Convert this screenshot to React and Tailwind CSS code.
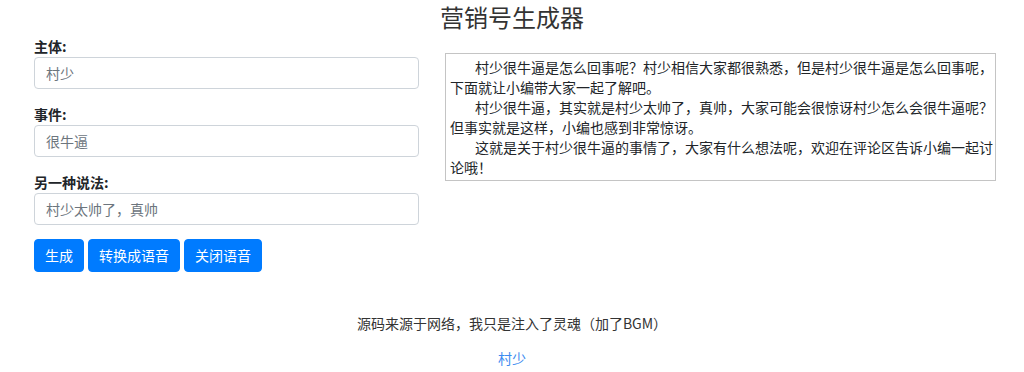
import React from "react";

const font = { fontFamily: '"Noto Sans CJK SC", "Liberation Sans", sans-serif' };

function Field({ label, placeholder }) {
  return (
    <div className="mb-[14px]">
      <div className="text-[14px] leading-[22px] font-bold text-[#212529]">{label}</div>
      <input
        readOnly
        placeholder={placeholder}
        className="block w-full h-[32px] rounded-[4px] border border-[#ced4da] bg-white px-[11px] text-[14px] text-[#495057] placeholder:text-[#6c757d] outline-none"
        style={font}
      />
    </div>
  );
}

export default function App() {
  return (
    <div className="w-[1024px] h-[372px] bg-white text-[#212529] overflow-hidden" style={font}>
      <h1 className="text-center text-[24px] leading-[32px] font-normal text-[#333] pt-[1px]">营销号生成器</h1>
      <div className="flex pl-[34px] mt-[2px] gap-[26px]">
        <div className="w-[385px] shrink-0">
          <Field label="主体:" placeholder="村少" />
          <Field label="事件:" placeholder="很牛逼" />
          <Field label="另一种说法:" placeholder="村少太帅了，真帅" />
          <div className="flex gap-[4px]">
            <button className="h-[33px] rounded-[4px] bg-[#007bff] border border-[#007bff] px-[10px] text-[14px] text-white">生成</button>
            <button className="h-[33px] rounded-[4px] bg-[#007bff] border border-[#007bff] px-[10px] text-[14px] text-white">转换成语音</button>
            <button className="h-[33px] rounded-[4px] bg-[#007bff] border border-[#007bff] px-[10px] text-[14px] text-white">关闭语音</button>
          </div>
        </div>
        <div className="w-[551px] shrink-0 mt-[18px] self-start border border-[#c4c4c4] pl-[4px] pr-0 py-[3px] text-[14px] leading-[20px] text-[#212529]">
          <p className="indent-[25px]">村少很牛逼是怎么回事呢？村少相信大家都很熟悉，但是村少很牛逼是怎么回事呢，下面就让小编带大家一起了解吧。</p>
          <p className="indent-[25px]">村少很牛逼，其实就是村少太帅了，真帅，大家可能会很惊讶村少怎么会很牛逼呢？但事实就是这样，小编也感到非常惊讶。</p>
          <p className="indent-[25px]">这就是关于村少很牛逼的事情了，大家有什么想法呢，欢迎在评论区告诉小编一起讨论哦！</p>
        </div>
      </div>
      <div className="mt-[41px] text-center text-[14px] leading-[20px] text-[#333]">源码来源于网络，我只是注入了灵魂（加了BGM）</div>
      <div className="mt-[15px] text-center text-[14px] leading-[20px] text-[#3d8bf0]">村少</div>
    </div>
  );
}
